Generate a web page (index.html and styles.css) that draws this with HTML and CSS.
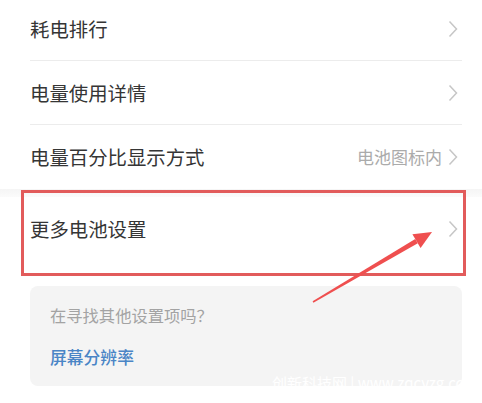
FILE: index.html
```html
<!DOCTYPE html>
<html lang="zh-CN">
<head>
<meta charset="utf-8">
<link rel="stylesheet" href="styles.css">
</head>
<body>
<div class="page">
  <div class="list">
    <div class="row"><span class="label">耗电排行</span><span class="right"><svg class="chev" viewBox="0 0 10 18"><polyline points="1.5,1.5 8.5,9 1.5,16.5"/></svg></span></div>
    <div class="row"><span class="label">电量使用详情</span><span class="right"><svg class="chev" viewBox="0 0 10 18"><polyline points="1.5,1.5 8.5,9 1.5,16.5"/></svg></span></div>
    <div class="row last"><span class="label">电量百分比显示方式</span><span class="right"><span class="value">电池图标内</span><svg class="chev" viewBox="0 0 10 18"><polyline points="1.5,1.5 8.5,9 1.5,16.5"/></svg></span></div>
  </div>
  <div class="gap"></div>
  <div class="list">
    <div class="row last"><span class="label">更多电池设置</span><span class="right"><svg class="chev" viewBox="0 0 10 18"><polyline points="1.5,1.5 8.5,9 1.5,16.5"/></svg></span></div>
  </div>
  <div class="card">
    <div class="hint">在寻找其他设置项吗？</div>
    <div class="link">屏幕分辨率</div>
  </div>

  <div class="highlight"></div>
  <svg class="arrow" viewBox="0 0 482 403" width="482" height="403">
    <polygon points="312.6,304.3 313.4,305.7 417.8,246.3 415.2,242.1"/>
    <polygon points="412.4,237.3 432,235 420.6,251.1"/>
  </svg>
  <div class="watermark">创新科技网 | www.zqcyzg.cc</div>
</div>
</body>
</html>
```
FILE: styles.css
```css
html, body {
  margin: 0;
  padding: 0;
  background: #ffffff;
}
body {
  font-family: "Noto Sans CJK SC", "Noto Sans", sans-serif;
  color: #333333;
  width: 482px;
  height: 403px;
  overflow: hidden;
}
.page {
  position: relative;
  width: 482px;
  height: 403px;
}
.list {
  padding: 0 20px 0 30px;
}
.list:first-child {
  margin-top: -3px;
}
.row {
  height: 63px;
  display: flex;
  align-items: center;
  justify-content: space-between;
  border-bottom: 1px solid #ececec;
  padding-right: 4px;
}
.row.last {
  border-bottom: none;
  height: 64px;
}
.label {
  font-size: 19.4px;
  color: #353535;
  line-height: 24px;
}
.right {
  display: flex;
  align-items: center;
  gap: 6px;
}
.value {
  font-size: 17px;
  color: #ababab;
  line-height: 22px;
}
.chev {
  width: 10px;
  height: 18px;
  display: block;
}
.chev polyline {
  fill: none;
  stroke: #c6c6c6;
  stroke-width: 1.5;
}
.gap {
  height: 8px;
  background: linear-gradient(#f5f5f5, #fbfbfb);
}
.card {
  margin: 25px 20px 0 30px;
  height: 100px;
  box-sizing: border-box;
  background: #f4f4f4;
  border-radius: 8px;
  padding: 17px 20px 0 20px;
}
.hint {
  font-size: 16.3px;
  line-height: 24px;
  color: #a3a3a3;
}
.link {
  margin-top: 18px;
  font-size: 16.8px;
  line-height: 24px;
  color: #4a85c6;
  font-weight: 500;
}
.highlight {
  position: absolute;
  left: 21px;
  top: 193px;
  width: 439px;
  height: 80px;
  border: 3px solid #e25b5b;
}
.arrow {
  position: absolute;
  left: 0;
  top: 0;
}
.arrow polygon {
  fill: #ef4f4f;
}
.watermark {
  position: absolute;
  left: 272px;
  top: 376px;
  font-size: 15px;
  line-height: 20px;
  color: #ffffff;
  white-space: nowrap;
  font-family: "Noto Sans CJK SC", "Liberation Sans", sans-serif;
}
```
